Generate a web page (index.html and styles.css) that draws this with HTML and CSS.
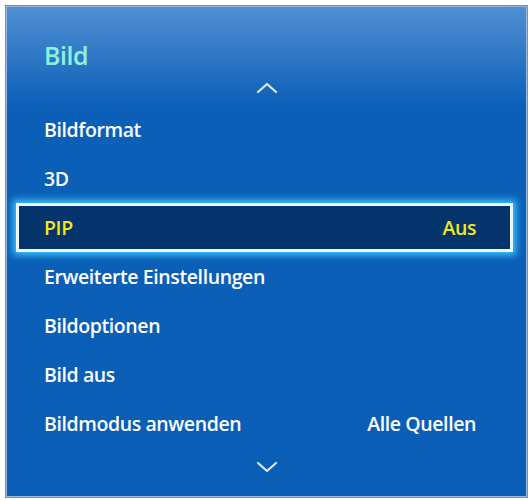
FILE: index.html
```html
<!DOCTYPE html>
<html lang="de">
<head>
<meta charset="utf-8">
<title>Bild</title>
<link rel="stylesheet" href="styles.css">
</head>
<body>
<div class="frame">
  <div class="panel">
    <div class="title">Bild</div>
    <div class="chev">
      <svg width="22" height="12" viewBox="0 0 22 12"><path d="M2 10 L11 2 L20 10" fill="none" stroke="#dfe9f5" stroke-width="2.2" stroke-linecap="round" stroke-linejoin="round"/></svg>
    </div>
    <ul class="list">
      <li class="row"><span>Bildformat</span></li>
      <li class="row"><span>3D</span></li>
      <li class="row sel"><span>PIP</span><span>Aus</span></li>
      <li class="row"><span>Erweiterte Einstellungen</span></li>
      <li class="row"><span>Bildoptionen</span></li>
      <li class="row"><span>Bild aus</span></li>
      <li class="row"><span>Bildmodus anwenden</span><span>Alle Quellen</span></li>
    </ul>
    <div class="chev down">
      <svg width="22" height="12" viewBox="0 0 22 12"><path d="M2 2 L11 10 L20 2" fill="none" stroke="#dfe9f5" stroke-width="2.2" stroke-linecap="round" stroke-linejoin="round"/></svg>
    </div>
  </div>
</div>
</body>
</html>
```
FILE: styles.css
```css
html, body {
  margin: 0;
  padding: 0;
  background: #ffffff;
}
body {
  width: 532px;
  height: 500px;
  font-family: "Open Sans", "Noto Sans", sans-serif;
}
.frame {
  margin: 5px 4px 0 5px;
  height: 493px;
  box-sizing: border-box;
  border: 1px solid #7d8ea6;
  background: #0a5eb6;
}
.panel {
  height: 100%;
  box-sizing: border-box;
  border: 1px solid #9bbbe0;
  border-top-color: #8fb3dc;
  background: linear-gradient(#4f8fd2 0, #2f77c6 50px, #0b5fb7 100px, #0a5eb6 100%);
  display: flex;
  flex-direction: column;
}
.title {
  margin: 32px 0 0 37px;
  height: 32px;
  line-height: 32px;
  font-size: 25px;
  font-weight: 600;
  color: #8ef0de;
  letter-spacing: -0.5px;
}
.chev {
  height: 34px;
  display: flex;
  align-items: center;
  justify-content: center;
}
.chev svg { display: block; }
.chev.down { height: 38px; }
.list {
  list-style: none;
  margin: 0;
  padding: 0 13px 0 9px;
}
.row {
  height: 49px;
  box-sizing: border-box;
  border: 3px solid transparent;
  padding: 0 34px 0 25px;
  display: flex;
  align-items: center;
  justify-content: space-between;
  color: #ffffff;
  font-size: 19.5px;
  font-weight: 600;
  letter-spacing: -0.4px;
}
.row.sel {
  color: #f7e51c;
  background: #05346c;
  border-color: #eef7ff;
  box-shadow: 0 0 7px 3px #3fc6ff;
}
```
